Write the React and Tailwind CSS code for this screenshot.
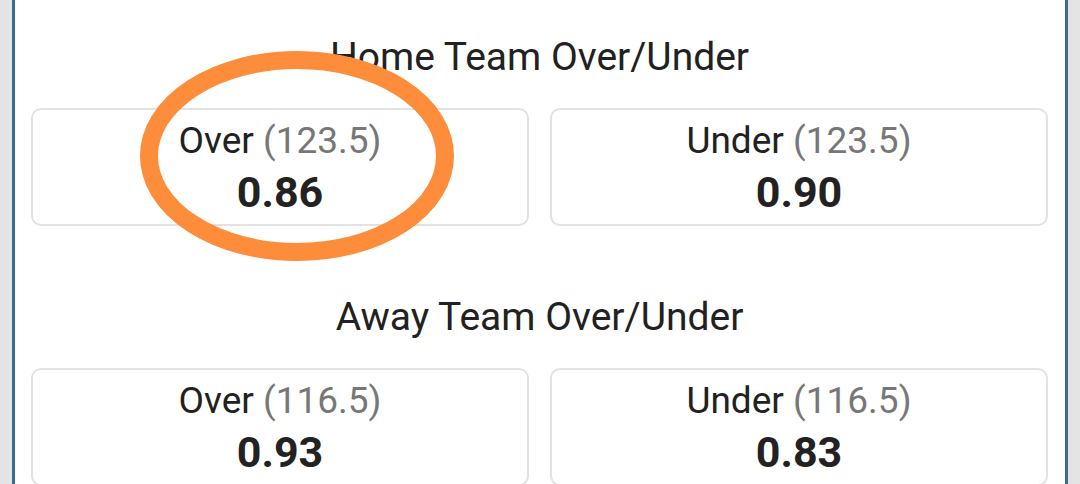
import React from "react";

const markets = [
  {
    title: "Home Team Over/Under",
    picks: [
      { label: "Over", line: "123.5", odds: "0.86" },
      { label: "Under", line: "123.5", odds: "0.90" },
    ],
  },
  {
    title: "Away Team Over/Under",
    picks: [
      { label: "Over", line: "116.5", odds: "0.93" },
      { label: "Under", line: "116.5", odds: "0.83" },
    ],
  },
];

function PickCard({ label, line, odds }) {
  return (
    <div className="h-[118px] rounded-[10px] border-2 border-[#e2e2e2] bg-white pt-[10px] pb-[10px] flex flex-col items-center">
      <p className="text-[37px] leading-[42px] text-[#212121]">
        {label} <span className="text-[#777777]">({line})</span>
      </p>
      <p className="mt-[8px] text-[43px] leading-[44px] font-bold text-[#222222]">{odds}</p>
    </div>
  );
}

export default function App() {
  return (
    <div
      className="relative h-[484px] w-[1080px] overflow-hidden flex bg-[#e4e4e4]"
      style={{ fontFamily: "Roboto, 'Noto Sans', sans-serif" }}
    >
      <div className="w-[12px] shrink-0" />
      <div className="flex-1 border-x-[3px] border-[#3c6c94] bg-white pl-[16px] pr-[17px]">
        {markets.map((m, i) => (
          <section key={m.title} className={i === 0 ? "pt-[33px]" : "pt-[67px]"}>
            <h2 className="h-[48px] mb-[27px] text-center text-[39px] leading-[48px] font-normal text-[#212121]">
              {m.title}
            </h2>
            <div className="grid grid-cols-2 gap-[21px]">
              {m.picks.map((p) => (
                <PickCard key={p.label} {...p} />
              ))}
            </div>
          </section>
        ))}
      </div>
      <div className="w-[12px] shrink-0" />

      {/* hand-drawn highlight */}
      <svg
        className="absolute left-[138px] top-[50px] pointer-events-none"
        width="318"
        height="212"
        viewBox="0 0 318 212"
      >
        <ellipse cx="159" cy="106" rx="148" ry="96" fill="none" stroke="#fd8c3b" strokeWidth="18" />
      </svg>
    </div>
  );
}
